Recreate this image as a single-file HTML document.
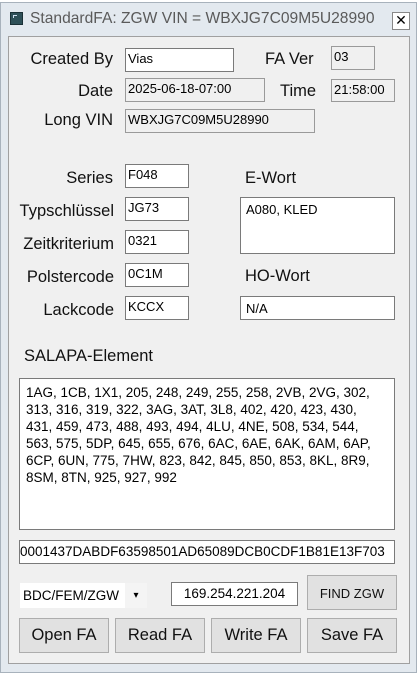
<!DOCTYPE html>
<html><head><meta charset="utf-8"><style>
*{margin:0;padding:0;box-sizing:border-box}
body{width:419px;height:673px;background:#fff;position:relative;overflow:hidden;font-family:"Liberation Sans","DejaVu Sans",sans-serif}
.frame{position:absolute;left:0;top:2px;width:417px;height:671px;background:#e3e9ef;border:1px solid #a8b2bc}
.client{position:absolute;left:8px;top:36px;width:402px;height:628px;background:#f0f0f0;border:1px solid #a0a0a0}
.a{position:absolute}
.t{position:absolute;left:30px;top:10px;font-size:15.6px;color:#5a5a5a;white-space:nowrap}
.l{position:absolute;font-size:16.5px;color:#111;white-space:nowrap}
.r{text-align:right}
.i{position:absolute;background:#fff;border:1px solid #7a7a7a;font-size:13px;color:#000;padding:2px 0 0 2px;white-space:nowrap;overflow:hidden}
.ro{background:#f0f0f0;border-color:#9a9a9a}
.b{position:absolute;background:#e1e1e1;border:1px solid #adadad;font-size:16.5px;color:#111;text-align:center}
</style></head><body>
<div class="frame"></div>
<div class="a" style="left:10px;top:12px;width:13px;height:13px;background:#2e5058;border:1px solid #1a3036"><div style="position:absolute;left:2px;top:2px;width:4px;height:3px;border-left:1px solid #cde;border-top:1px solid #cde"></div></div>
<div class="t">StandardFA: ZGW VIN = WBXJG7C09M5U28990</div>
<div class="a" style="left:392px;top:12px;width:18px;height:18px;background:#fff;border:1px solid #888;font-size:14px;font-weight:bold;text-align:center;line-height:15px">✕</div>
<div class="client"></div>

<div class="l r" style="left:0;width:113px;top:50px">Created By</div>
<div class="i" style="left:125px;top:48px;width:109px;height:24px">Vias</div>
<div class="l" style="left:265px;top:50px">FA Ver</div>
<div class="i ro" style="left:331px;top:46px;width:44px;height:24px">03</div>

<div class="l r" style="left:0;width:113px;top:82px">Date</div>
<div class="i ro" style="left:125px;top:78px;width:140px;height:24px">2025-06-18-07:00</div>
<div class="l" style="left:280px;top:82px">Time</div>
<div class="i ro" style="left:331px;top:79px;width:64px;height:23px">21:58:00</div>

<div class="l r" style="left:0;width:113px;top:111px">Long VIN</div>
<div class="i ro" style="left:125px;top:109px;width:190px;height:24px">WBXJG7C09M5U28990</div>

<div class="l r" style="left:0;width:113px;top:169px">Series</div>
<div class="i" style="left:125px;top:164px;width:64px;height:24px">F048</div>
<div class="l r" style="left:0;width:114px;top:202px">Typschlüssel</div>
<div class="i" style="left:125px;top:197px;width:64px;height:24px">JG73</div>
<div class="l r" style="left:0;width:114px;top:235px">Zeitkriterium</div>
<div class="i" style="left:125px;top:230px;width:64px;height:24px">0321</div>
<div class="l r" style="left:0;width:114px;top:268px">Polstercode</div>
<div class="i" style="left:125px;top:263px;width:64px;height:24px">0C1M</div>
<div class="l r" style="left:0;width:114px;top:301px">Lackcode</div>
<div class="i" style="left:125px;top:296px;width:64px;height:24px">KCCX</div>

<div class="l" style="left:245px;top:169px">E-Wort</div>
<div class="i" style="left:240px;top:197px;width:155px;height:57px;padding:4px 0 0 5px">A080, KLED</div>
<div class="l" style="left:245px;top:267px">HO-Wort</div>
<div class="i" style="left:240px;top:296px;width:155px;height:24px;padding:4px 0 0 5px">N/A</div>

<div class="l" style="left:24px;top:347px">SALAPA-Element</div>
<div class="i" style="left:19px;top:378px;width:376px;height:152px;padding:5px 0 0 6px;white-space:normal;line-height:17px;font-size:13.5px">1AG, 1CB, 1X1, 205, 248, 249, 255, 258, 2VB, 2VG, 302,<br>313, 316, 319, 322, 3AG, 3AT, 3L8, 402, 420, 423, 430,<br>431, 459, 473, 488, 493, 494, 4LU, 4NE, 508, 534, 544,<br>563, 575, 5DP, 645, 655, 676, 6AC, 6AE, 6AK, 6AM, 6AP,<br>6CP, 6UN, 775, 7HW, 823, 842, 845, 850, 853, 8KL, 8R9,<br>8SM, 8TN, 925, 927, 992</div>

<div class="i" style="left:19px;top:540px;width:376px;height:24px;padding:3px 0 0 0;font-size:13.5px;direction:rtl;text-align:left">0001437DABDF63598501AD65089DCB0CDF1B81E13F703</div>

<div class="a" style="left:20px;top:583px;width:127px;height:25px;background:#fff;font-size:13.5px;padding:5px 0 0 3px">BDC/FEM/ZGW</div>
<div class="a" style="left:125px;top:583px;width:22px;height:25px;background:#f4f4f4;font-size:10px;text-align:center;padding-top:7px">▾</div>
<div class="i" style="left:171px;top:582px;width:127px;height:24px;text-align:center;padding:3px 0 0;font-size:13.5px">169.254.221.204</div>
<div class="b" style="left:307px;top:575px;width:90px;height:35px;font-size:13px;padding-top:10px">FIND ZGW</div>

<div class="b" style="left:19px;top:618px;width:90px;height:35px;padding-top:7px">Open FA</div>
<div class="b" style="left:115px;top:618px;width:90px;height:35px;padding-top:7px">Read FA</div>
<div class="b" style="left:211px;top:618px;width:90px;height:35px;padding-top:7px">Write FA</div>
<div class="b" style="left:307px;top:618px;width:90px;height:35px;padding-top:7px">Save FA</div>
</body></html>
